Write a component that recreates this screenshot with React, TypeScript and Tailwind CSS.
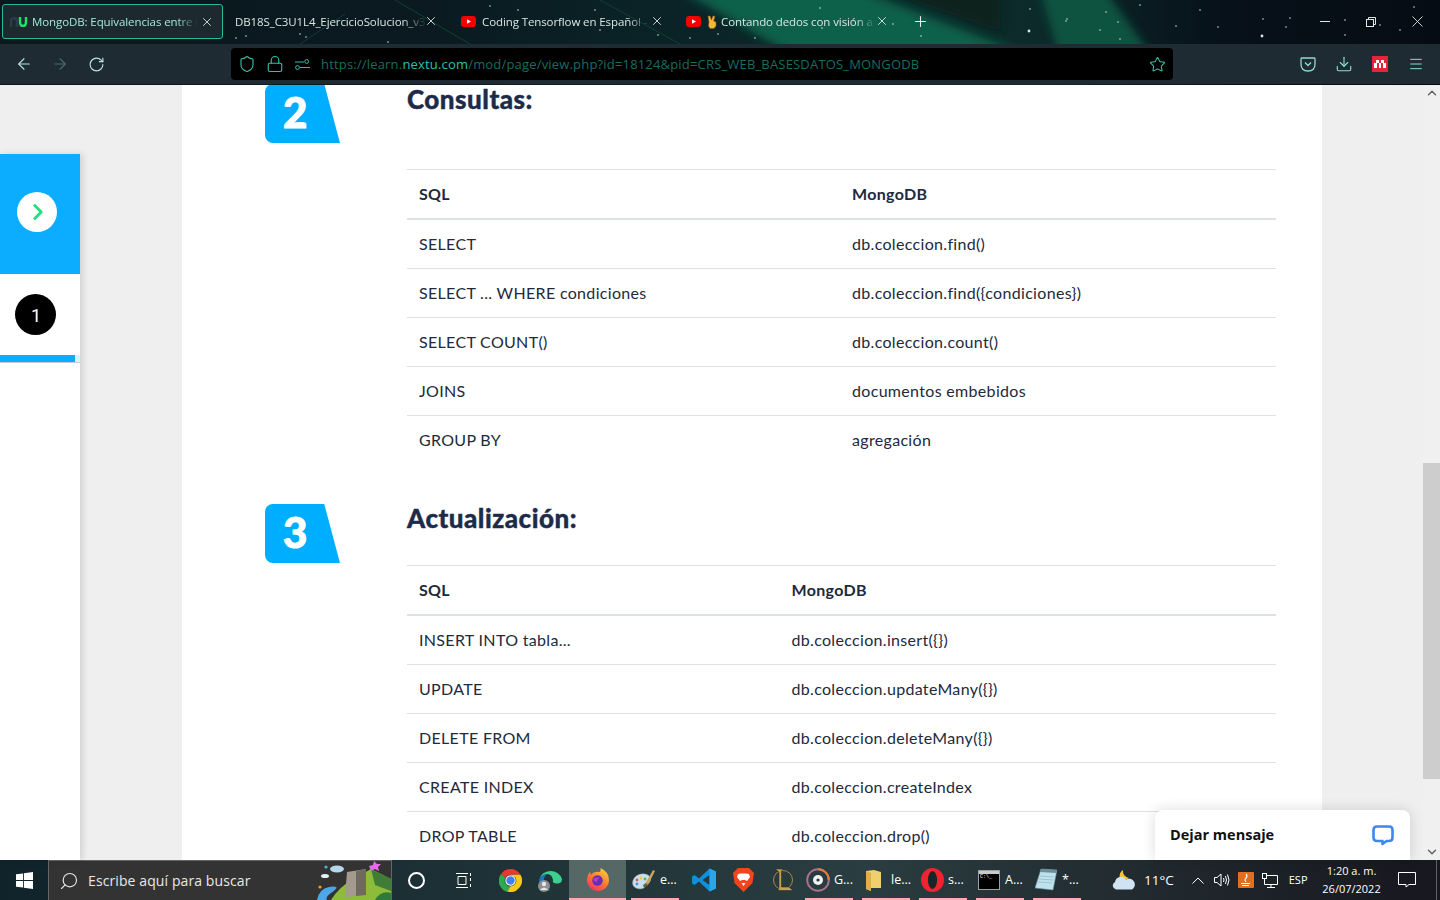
import { ReactNode } from "react";
import { ArrowLeft, ArrowRight, ChevronDown, ChevronRight, ChevronUp, Download, Lock, Menu, Plus, RotateCw, Search, Shield, Star, X } from "lucide-react";

const sans = "font-['Lato','Noto_Sans',sans-serif]";
const ui = "font-['Open_Sans','Noto_Sans',sans-serif]";

const consultas = [
  ["SELECT", "db.coleccion.find()"],
  ["SELECT ... WHERE condiciones", "db.coleccion.find({condiciones})"],
  ["SELECT COUNT()", "db.coleccion.count()"],
  ["JOINS", "documentos embebidos"],
  ["GROUP BY", "agregación"],
];

const actualizacion = [
  ["INSERT INTO tabla...", "db.coleccion.insert({})"],
  ["UPDATE", "db.coleccion.updateMany({})"],
  ["DELETE FROM", "db.coleccion.deleteMany({})"],
  ["CREATE INDEX", "db.coleccion.createIndex"],
  ["DROP TABLE", "db.coleccion.drop()"],
];

const stars = [
  [236, 38, 1], [246, 36, 1], [300, 34, 1], [306, 37, 1], [388, 42, 1], [490, 6, 1], [518, 10, 1], [595, 10, 1], [600, 30, 1], [658, 35, 1],
  [690, 38, 1], [718, 34, 1], [755, 38, 1], [820, 8, 1], [822, 28, 1], [893, 24, 1], [921, 36, 1], [1029, 31, 1], [1066, 21, 1], [1067, 19, 1],
  [1029, 31, 1.4], [1100, 30, 1], [1120, 39, 1], [1140, 5, 1], [1118, 22, 1], [1176, 26, 1], [1218, 27, 1], [1200, 10, 1], [1263, 19, 1], [1262, 36, 1],
  [1290, 18, 1], [1262, 36, 1.4], [1286, 27, 1], [1345, 20, 1], [1414, 7, 1], [1380, 25, 1], [1345, 35, 1], [1030, 9, 1], [1106, 12, 1], [1400, 30, 1],
];

function Galaxy() {
  return (
    <svg className="absolute left-0 top-0 h-[85px] w-[1440px]" viewBox="0 0 1440 85">
      <defs>
        <linearGradient id="sky" x1="0" x2="1" y1="0" y2="0">
          <stop offset="0" stopColor="#0b181e" />
          <stop offset="0.3" stopColor="#0a1a20" />
          <stop offset="0.42" stopColor="#0a2126" />
          <stop offset="0.66" stopColor="#0c2b2a" />
          <stop offset="0.72" stopColor="#0c2a2a" />
          <stop offset="0.8" stopColor="#091a20" />
          <stop offset="0.85" stopColor="#071119" />
          <stop offset="1" stopColor="#060c14" />
        </linearGradient>
        <filter id="soft"><feGaussianBlur stdDeviation="5" /></filter>
      </defs>
      <rect width="1440" height="85" fill="url(#sky)" />
      <g filter="url(#soft)">
        <polygon points="680,-10 860,-10 1040,60 800,60" fill="#0b6048" />
        <polygon points="880,-10 1000,-10 1000,32" fill="#07241f" />
        <polygon points="1040,-10 1105,-10 1155,60 1060,60" fill="#0e523f" />
      </g>
      <path d="M395 0 L470 44 M600 0 L680 44" stroke="#123f36" strokeWidth="1" />
      <path d="M345 14 L300 44" stroke="#0e3a32" strokeWidth="1" />
      {stars.map(([x, y, r], i) => (
        <circle key={i} cx={x} cy={y} r={r} fill="#dbe9e6" opacity={r > 1 ? 1 : 0.55} />
      ))}
    </svg>
  );
}

function YouTube() {
  return (
    <svg width="15" height="11" viewBox="0 0 15 11" className="shrink-0">
      <rect width="15" height="11" rx="3" fill="#f40000" />
      <path d="M6 3.2 L10 5.5 L6 7.8 Z" fill="#fff" />
    </svg>
  );
}

function Tab({ width, active, icon, title, titleWidth, closeLeft }: { width: string; active?: boolean; icon?: ReactNode; title: string; titleWidth: string; closeLeft: string }) {
  return (
    <div className={`relative flex h-[35px] shrink-0 items-center rounded-[3px] ${width} ${active ? "border border-[#2ab8a0] bg-[#1c2a30] pl-[7px] text-[#a5e6da]" : "pl-[12px] text-[#d9e6e3]"}`}>
      {icon}
      <div className={`overflow-hidden whitespace-nowrap pt-px text-[11.5px] leading-[16px] tracking-[-0.1px] [mask-image:linear-gradient(to_right,black_87%,transparent)] ${titleWidth} ${ui}`}>{title}</div>
      <X size={14} strokeWidth={1.5} className={`absolute top-[10px] text-[#dcebe8] ${closeLeft}`} />
    </div>
  );
}

function Emoji() {
  return (
    <svg width="11" height="14" viewBox="0 0 11 14" className="ml-[6px] mr-[3px] shrink-0">
      <path d="M2 7 L1 1 L3 1 L4.5 5 L6 .8 L8 1.4 L6.6 6 L9 7 L9 11 L7 13.5 L3 13.5 L1.5 11 Z" fill="#f5b83d" stroke="#8a5a10" strokeWidth=".6" />
    </svg>
  );
}

function NuLogo() {
  return (
    <svg width="18" height="10" viewBox="0 0 18 10" className="mr-[4px] shrink-0" fill="none" strokeWidth="2.4">
      <path d="M1 10 V5 Q1 1 4 1 Q7 1 7 5 V10" stroke="#2e3a48" />
      <path d="M10 0 V5 Q10 9 13 9 Q16 9 16 5 V0" stroke="#1ee06f" />
    </svg>
  );
}

function TabBar() {
  return (
    <div className="relative flex h-[44px] items-start pl-[2px] pt-[4px]">
      <Tab width="w-[221px]" active icon={<NuLogo />} title="MongoDB: Equivalencias entre l" titleWidth="w-[166px]" closeLeft="left-[197px]" />
      <Tab width="w-[226px]" title="DB18S_C3U1L4_EjercicioSolucion_v3" titleWidth="w-[192px]" closeLeft="left-[201px]" />
      <Tab width="w-[225px]" icon={<YouTube />} title="Coding Tensorflow en Español -" titleWidth="ml-[6px] w-[168px]" closeLeft="left-[201px]" />
      <Tab width="w-[225px]" icon={<><YouTube /><Emoji /></>} title="Contando dedos con visión a" titleWidth="w-[155px]" closeLeft="left-[201px]" />
      <div className="flex h-[35px] w-[42px] items-center justify-center"><Plus size={17} strokeWidth={1.5} className="text-[#e6f0ee]" /></div>
      <div className="ml-auto flex h-[35px] items-center text-[#dfe8e6]">
        <div className="flex w-[46px] justify-center"><div className="h-px w-[10px] bg-[#dfe8e6]" /></div>
        <div className="flex w-[46px] justify-center">
          <svg width="10" height="10" viewBox="0 0 10 10" fill="none" stroke="currentColor"><rect x=".5" y="2.5" width="7" height="7" /><path d="M2.5 2.5 V.5 H9.5 V7.5 H7.5" /></svg>
        </div>
        <div className="flex w-[46px] justify-center">
          <svg width="11" height="11" viewBox="0 0 11 11" stroke="currentColor" strokeWidth=".9"><path d="M.5 .5 L10.5 10.5 M10.5 .5 L.5 10.5" /></svg>
        </div>
      </div>
    </div>
  );
}

function ToolBar() {
  return (
    <div className="relative flex h-[40px] items-center bg-[#1f2b32]">
      <div className="flex w-[231px] items-center pl-[6px]">
        <div className="flex w-[36px] justify-center"><ArrowLeft size={18} strokeWidth={1.5} className="text-[#b5e5dc]" /></div>
        <div className="flex w-[36px] justify-center"><ArrowRight size={18} strokeWidth={1.5} className="text-[#4c6a67]" /></div>
        <div className="flex w-[36px] justify-center"><RotateCw size={17} strokeWidth={1.6} className="text-[#b5e5dc]" /></div>
      </div>
      <div className="flex h-[32px] w-[942px] items-center rounded-[4px] bg-black pl-[7px] pr-[7px]">
        <Shield size={18} strokeWidth={1.5} className="text-[#37bda8]" />
        <Lock size={18} strokeWidth={1.5} className="ml-[10px] text-[#37bda8]" />
        <svg width="15" height="11" viewBox="0 0 15 11" fill="none" stroke="#37bda8" className="ml-[11px]">
          <path d="M0 3 H9 M5 8.5 H15" />
          <circle cx="11.7" cy="2.5" r="1.9" />
          <circle cx="2.5" cy="8.5" r="1.9" />
        </svg>
        <div className={`ml-[11px] whitespace-nowrap pt-px text-[13px] tracking-[0.18px] text-[#176d60] ${ui}`}>
          https://learn.<span className="text-[#2fc0aa]">nextu.com</span>/mod/page/view.php?id=18124&pid=CRS_WEB_BASESDATOS_MONGODB
        </div>
        <Star size={17} strokeWidth={1.5} className="ml-auto text-[#37bda8]" />
      </div>
      <div className="flex flex-1 items-center justify-end pr-[16px] text-[#8fdccd]">
        <svg width="16" height="15" viewBox="0 0 16 15" fill="none" stroke="currentColor" strokeWidth="1.3">
          <path d="M1.5 1 H14.5 Q15 1 15 2 V7 Q15 14 8 14 Q1 14 1 7 V2 Q1 1 1.5 1 Z" />
          <path d="M5 5.5 L8 8.5 L11 5.5" />
        </svg>
        <Download size={18} strokeWidth={1.5} className="ml-[19px]" />
        <div className="ml-[19px] flex h-[16px] w-[16px] items-center justify-center bg-[#e6243a]">
          <svg width="14" height="8" viewBox="0 0 14 8" fill="#fff">
            <path d="M3 0 H6 V3 H3 Z M8 0 H11 V3 H8 Z M1 3 H4 V8 H1 Z M6 3 H8 V8 H6 Z M10 3 H13 V8 H10 Z" />
          </svg>
        </div>
        <Menu size={16} strokeWidth={1.5} className="ml-[20px]" />
      </div>
    </div>
  );
}

function Badge({ n, className }: { n: string; className?: string }) {
  return (
    <div className={`flex h-[59px] w-[75px] items-center rounded-l-[8px] bg-[#00aeff] pb-[4px] pl-[18px] [clip-path:polygon(0_0,79%_0,100%_100%,0_100%)] ${className ?? ""}`}>
      <span className={`text-[42px] leading-none font-black text-white [-webkit-text-stroke:1px_white] ${sans}`}>{n}</span>
    </div>
  );
}

function Table({ rows, cols }: { rows: string[][]; cols: string }) {
  return (
    <div className="w-[869px] border-t border-[#dee2e6] text-[16px] text-[#212a3b]">
      <div className={`grid h-[50px] items-center border-b-2 border-[#dee2e6] font-bold ${cols}`}>
        <div className="pl-[12px]">SQL</div>
        <div className="pl-[12px]">MongoDB</div>
      </div>
      {rows.map((row, i) => (
        <div key={row[0]} className={`grid items-center ${cols} ${i === rows.length - 1 ? "h-[48px]" : "h-[49px] border-b border-[#dee2e6]"}`}>
          <div className="pl-[12px]">{row[0]}</div>
          <div className="pl-[12px]">{row[1]}</div>
        </div>
      ))}
    </div>
  );
}

function Article() {
  return (
    <div className={`h-full w-[1140px] shrink-0 overflow-hidden bg-white tracking-[0.32px] ${sans}`}>
      <div className="flex pl-[83px]">
        <Badge n="2" className="-mt-[1px]" />
        <div className="ml-[67px]">
          <h2 className="h-[84px] text-[26px] leading-[28px] font-black tracking-[0.5px] text-[#1d2b4a] [-webkit-text-stroke:0.4px_#1d2b4a]">Consultas:</h2>
          <Table rows={consultas} cols="grid-cols-[433px_1fr]" />
        </div>
      </div>
      <div className="mt-[40px] flex pl-[83px]">
        <Badge n="3" />
        <div className="ml-[67px]">
          <h2 className="h-[61px] text-[26px] leading-[28px] font-black tracking-[0.5px] text-[#1d2b4a] [-webkit-text-stroke:0.4px_#1d2b4a]">Actualización:</h2>
          <Table rows={actualizacion} cols="grid-cols-[372.5px_1fr]" />
        </div>
      </div>
    </div>
  );
}

function Sidebar() {
  return (
    <div className="w-[80px] shrink-0 pt-[69px]">
      <div className="h-full bg-white shadow-[3px_0_6px_rgba(0,0,0,0.12)]">
        <div className="flex h-[120px] items-start bg-[#0cadff] pl-[17px] pt-[38px]">
          <div className="flex h-[40px] w-[40px] items-center justify-center rounded-full bg-white pl-[2px]">
            <ChevronRight size={26} strokeWidth={2.6} className="text-[#1fe07a]" />
          </div>
        </div>
        <div className="flex h-[81px] items-start pl-[15px] pt-[20px]">
          <div className="flex h-[41px] w-[41px] items-center justify-center rounded-full bg-black pl-px pt-[2px] font-['Roboto',sans-serif] text-[18px] text-white">1</div>
        </div>
        <div className="flex h-[8px] border-b border-[#c8ccd0] bg-[#d9f3ff]">
          <div className="h-[7px] w-[75px] bg-[#0cadff]" />
        </div>
      </div>
    </div>
  );
}

function Scrollbar() {
  return (
    <div className="flex h-full w-[17px] shrink-0 flex-col items-center bg-[#f0f0f0]">
      <ChevronUp size={14} strokeWidth={2.5} className="mt-[1px] text-[#5f6368]" />
      <div className="mt-[363px] h-[316px] w-full bg-[#cdcdcd]" />
      <ChevronDown size={14} strokeWidth={2.5} className="mt-auto mb-[1px] text-[#5f6368]" />
    </div>
  );
}

function ChatWidget() {
  return (
    <div className="absolute bottom-0 left-[1155px] flex h-[50px] w-[255px] items-center justify-between rounded-t-[8px] bg-white pl-[15px] pr-[16px] shadow-[0_0_14px_rgba(0,0,0,0.14)]">
      <span className={`text-[14.5px] font-bold text-[#111] ${ui}`}>Dejar mensaje</span>
      <svg width="22" height="21" viewBox="0 0 22 21" fill="none" stroke="#3f86f5" strokeWidth="2.6">
        <path d="M5 1.5 H17 Q20.5 1.5 20.5 5 V12.5 Q20.5 16 17 16 H14.5 L10.5 19 V16 H5 Q1.5 16 1.5 12.5 V5 Q1.5 1.5 5 1.5 Z" strokeLinejoin="round" />
      </svg>
    </div>
  );
}

function Cell({ width, active, running, children }: { width: string; active?: boolean; running?: boolean; children: ReactNode }) {
  return (
    <div className={`relative flex h-full shrink-0 items-center justify-center ${width} ${active ? "bg-[#566865]" : ""}`}>
      {children}
      {running && <div className="absolute bottom-0 left-0 h-[2px] w-full bg-[#ffabab]" />}
    </div>
  );
}

// cell for a running app with a cropped title next to its icon
function AppCell({ label, children }: { label: string; children: ReactNode }) {
  return (
    <div className="relative flex h-full w-[48px] shrink-0 items-center">
      <div className="flex w-[26px] shrink-0 justify-center">{children}</div>
      <span className={`ml-[3px] text-[12.5px] text-white ${ui}`}>{label}</span>
      <div className="absolute bottom-0 left-0 h-[2px] w-full bg-[#ffabab]" />
    </div>
  );
}

const Chrome = () => (
  <svg width="23" height="23" viewBox="0 0 22 22">
    <path d="M11 0 A11 11 0 0 1 20.5 5.5 L11 5.5 A5.5 5.5 0 0 0 6.2 8.2 L1.8 5 A11 11 0 0 1 11 0Z" fill="#e33b2e" />
    <path d="M1.8 5 L6.2 8.2 A5.5 5.5 0 0 0 11 16.5 L8 22 A11 11 0 0 1 1.8 5Z" fill="#2fa84f" />
    <path d="M20.5 5.5 A11 11 0 0 1 8 21.6 L11 16.5 A5.5 5.5 0 0 0 15.6 8 L11 5.5 Z" fill="#f9c916" />
    <circle cx="11" cy="11" r="5" fill="#fff" />
    <circle cx="11" cy="11" r="4" fill="#3f80ea" />
  </svg>
);

const Edge = () => (
  <svg width="24" height="25" viewBox="0 0 24 25">
    <path d="M1 12 A12 12 0 0 1 24 11 Q24 16 18 15.5 Q14 15 15 12 Q14 6 9 6 Q3 7 1 12Z" fill="#3ccf90" />
    <path d="M1 12 Q3 7 9 6 Q5 9 6 15 Q7 21 13 23 A12 12 0 0 1 1 12Z" fill="#1475c9" />
    <circle cx="6" cy="18" r="6" fill="#8d8f92" />
    <circle cx="6" cy="16" r="2.2" fill="#e8e8e8" />
    <path d="M2 22 Q6 17 10 22 Z" fill="#e8e8e8" />
  </svg>
);

const Firefox = () => (
  <svg width="24" height="24" viewBox="0 0 24 24">
    <defs>
      <linearGradient id="ff" x1="0.8" y1="0" x2="0.2" y2="1">
        <stop offset="0" stopColor="#ffd33d" />
        <stop offset="0.5" stopColor="#ff7a2f" />
        <stop offset="1" stopColor="#ee2f6c" />
      </linearGradient>
    </defs>
    <path d="M1 12 Q1 7 4 4 L5 7 Q8 3 14 4 Q15 2 14.5 0 Q23 4 23 12 A11 11 0 0 1 1 12Z" fill="url(#ff)" />
    <circle cx="11.5" cy="12.5" r="5.2" fill="#6a2bb5" />
    <path d="M7 11 Q11 8 14 10 Q11 11 11 14 Q8 14 7 11Z" fill="#b33fc4" />
  </svg>
);

const Palette = () => (
  <svg width="24" height="22" viewBox="0 0 24 22">
    <path d="M0.5 14 C1 7 8 4 13 5 C19 6 20 11 17 14 C14 15 13 16 13 18 C11 21 1 21 0.5 14Z" fill="#c9e0ec" stroke="#7d98a8" strokeWidth=".5" />
    <circle cx="5" cy="11" r="1.4" fill="#e05a4b" />
    <circle cx="9" cy="9" r="1.4" fill="#f3c737" />
    <circle cx="13" cy="10" r="1.4" fill="#4fb868" />
    <circle cx="5" cy="15" r="1.4" fill="#4c8fe0" />
    <path d="M13 15 L21 1 L23 2 L16 16 Z" fill="#caa15d" />
    <path d="M11 16 L14 14 L16 16.5 L12 19Z" fill="#6e5a3c" />
  </svg>
);

const VsCode = () => (
  <svg width="24" height="24" viewBox="0 0 24 24">
    <path d="M17.5 .5 L24 3.5 V20.5 L17.5 23.5 L7 13.5 L2.5 17 L0 15.5 V8.5 L2.5 7 L7 10.5 Z M17.5 7 L10.5 12 L17.5 17 Z" fill="#0f8fdc" />
    <path d="M17.5 .5 L24 3.5 V20.5 L17.5 23.5 Z" fill="#2aa5ea" />
  </svg>
);

const Brave = () => (
  <svg width="21" height="24" viewBox="0 0 21 24">
    <path d="M5 0 H16 L19 3 L21 5 L19.5 15 L10.5 24 L1.5 15 L0 5 L2 3 Z" fill="#f4431f" />
    <path d="M5 6 L8 5.5 H13 L16 6 L17 9 L14 13 L12 12 H9 L7 13 L4 9 Z M8.5 15 H12.5 L10.5 18 Z" fill="#fff" />
  </svg>
);

const League = () => (
  <svg width="22" height="24" viewBox="0 0 22 24" fill="none">
    <circle cx="11" cy="12" r="9.5" stroke="#a9873f" strokeWidth="1" />
    <path d="M3.5 1 H11 L9.5 3 V19 H17 L21 22.5 H6 L7 20 V4 Z" fill="#c6a052" stroke="#20282c" strokeWidth=".5" />
  </svg>
);

const Groove = () => (
  <svg width="24" height="24" viewBox="0 0 24 24" fill="none">
    <circle cx="12" cy="12" r="10.8" stroke="#a96f8f" strokeWidth="2" />
    <path d="M12 1.2 A10.8 10.8 0 0 1 22.8 12" stroke="#e07b3a" strokeWidth="2" />
    <circle cx="12" cy="12" r="5" fill="#f1f1f1" />
    <circle cx="12" cy="12" r="1.6" fill="#2a3638" />
  </svg>
);

const Folder = () => (
  <svg width="15" height="21" viewBox="0 0 15 21" className="-ml-[4px]">
    <path d="M0 1 L8 0 L15 2 V18 L5 18 L5 21 L0 19 Z" fill="#f0cf6e" />
    <path d="M0 1 L5 3 V21 L0 19 Z" fill="#dcb14a" />
  </svg>
);

const Opera = () => (
  <svg width="23" height="24" viewBox="0 0 23 24">
    <ellipse cx="11.5" cy="12" rx="11.5" ry="12" fill="#f0242f" />
    <ellipse cx="11.5" cy="12" rx="4.6" ry="9" fill="#18262a" />
  </svg>
);

const Cmd = () => (
  <div className="flex h-[20px] w-[22px] flex-col border border-[#9aa0a3] bg-black">
    <div className="h-[3px] bg-[#c7cbce]" />
    <div className="pl-[1px] font-mono text-[5px] leading-[7px] text-white">C:\_</div>
  </div>
);

const Notepad = () => (
  <svg width="22" height="24" viewBox="0 0 22 24">
    <path d="M6 1 L22 2 L18 22 L0 20 Z" fill="#bfe3ee" stroke="#6c8b97" strokeWidth=".6" />
    <path d="M6 1 L22 2 L21.3 5 L4.7 4 Z" fill="#6d8d99" />
    <path d="M5 8 L19 9 M4 11 L18 12 M3 14 L17 15" stroke="#8fb6c4" strokeWidth=".7" />
  </svg>
);

function Taskbar() {
  return (
    <div className={`flex h-[40px] shrink-0 items-stretch bg-gradient-to-r from-[#10232a] via-[#2a3d40] via-60% to-[#17171e] text-white ${ui}`}>
      <div className="flex w-[48px] items-center justify-center">
        <svg width="17" height="17" viewBox="0 0 16 16" fill="#fff">
          <path d="M0 2.2 L6.6 1.3 V7.6 H0 Z M7.4 1.2 L16 0 V7.6 H7.4 Z M0 8.4 H6.6 V14.7 L0 13.8 Z M7.4 8.4 H16 V16 L7.4 14.8 Z" />
        </svg>
      </div>
      <div className="flex w-[344px] items-center overflow-hidden border border-b-0 border-[#666] bg-[#333333] pl-[10px]">
        <Search size={20} strokeWidth={1.4} className="-scale-x-100 text-[#e4e4e4]" />
        <span className="ml-[9px] text-[14px] tracking-[0.1px] text-[#e8e8e8]">Escribe aquí para buscar</span>
        <svg width="74" height="39" viewBox="0 0 74 39" className="ml-auto shrink-0">
          <path d="M14 39 Q22 26 36 18 L54 8 L74 18 V39 Z" fill="#8dbb3a" />
          <path d="M54 8 L74 18 V30 L58 24 Z" fill="#3f7d36" />
          <path d="M0 39 Q2 28 12 26 Q26 24 14 32 Q8 36 10 39 Z" fill="#4da6e8" />
          <path d="M30 11 L49 8 L49 34 L28 36 Z" fill="#a39c8e" />
          <path d="M39 10 L49 8 L49 34 L39 35 Z" fill="#6f695f" />
          <path d="M58 39 Q64 29 74 32 V39 Z" fill="#2f7a3a" />
          <ellipse cx="20" cy="8" rx="7" ry="3.5" fill="#b6d8ee" />
          <ellipse cx="8" cy="15" rx="4" ry="2" fill="#e6f2fa" />
          <circle cx="9" cy="6" r="1.6" fill="#3dbad8" />
          <circle cx="3" cy="26" r="1.6" fill="#f39c1f" />
          <path d="M52 5 L56 4 L57 0 L60 3 L64 3 L61 6 L62 10 L58 8 L54 10 Z" fill="#e56be8" />
        </svg>
      </div>
      <Cell width="w-[48px]"><div className="h-[17px] w-[17px] rounded-full border-[2.5px] border-white" /></Cell>
      <Cell width="w-[47px]">
        <svg width="16" height="15" viewBox="0 0 16 15" fill="none" stroke="#fff">
          <path d="M0 .5 H12 M0 14.5 H12 M2 3.5 H10 V11.5 H2 Z M14.5 0 V3 M14.5 5 V8 M14.5 11 V14" />
        </svg>
      </Cell>
      <div className="w-[3px]" />
      <Cell width="w-[40px]"><Chrome /></Cell>
      <Cell width="w-[39px]"><Edge /></Cell>
      <Cell width="w-[57px]" active running><Firefox /></Cell>
      <div className="w-[5px]" />
      <AppCell label="e..."><Palette /></AppCell>
      <div className="w-[5px]" />
      <Cell width="w-[40px]"><VsCode /></Cell>
      <Cell width="w-[39px]"><Brave /></Cell>
      <Cell width="w-[39px]"><League /></Cell>
      <div className="w-[3px]" />
      <AppCell label="G..."><Groove /></AppCell>
      <div className="w-[9px]" />
      <AppCell label="le..."><Folder /></AppCell>
      <div className="w-[9px]" />
      <AppCell label="s..."><Opera /></AppCell>
      <div className="w-[9px]" />
      <AppCell label="A..."><Cmd /></AppCell>
      <div className="w-[9px]" />
      <AppCell label="*..."><Notepad /></AppCell>
      <div className="flex flex-1 items-center">
        <svg width="24" height="20" viewBox="0 0 24 20" className="ml-[31px] shrink-0">
          <path d="M11 0 A6.5 6.5 0 0 0 8 8 A7 7 0 0 0 17 8 A7 7 0 0 1 11 0Z" fill="#f7c331" />
          <path d="M4 19.5 A4 4 0 0 1 3 12 A6 6 0 0 1 14 9.5 A5 5 0 0 1 20 19.5 Z" fill="#cfe3f2" />
        </svg>
        <span className="ml-[8px] text-[13.5px]">11°C</span>
        <svg width="12" height="7" viewBox="0 0 12 7" fill="none" stroke="#fff" className="ml-[18px]"><path d="M.5 6.5 L6 1 L11.5 6.5" /></svg>
        <svg width="16" height="14" viewBox="0 0 16 14" fill="none" stroke="#fff" className="ml-[10px]">
          <path d="M.5 4.5 H3 L7 1 V13 L3 9.5 H.5 Z M9.5 5 Q10.5 7 9.5 9 M11.5 3 Q13.5 7 11.5 11 M13.5 1.5 Q16.5 7 13.5 12.5" />
        </svg>
        <svg width="16" height="16" viewBox="0 0 16 16" className="ml-[8px]">
          <rect width="16" height="16" rx="1" fill="#e0701f" />
          <path d="M8 2 Q10 4 8 6 Q6 8 8 10 M3 11.5 H12 M4 13.5 H11" fill="none" stroke="#fff" strokeWidth="1.1" />
        </svg>
        <svg width="16" height="15" viewBox="0 0 16 15" fill="none" stroke="#fff" className="ml-[8px]">
          <path d="M4 2.5 H15.5 V11.5 H2.5 V6 M9 11.5 V14 M5 14.5 H13" />
          <rect x=".5" y=".5" width="4" height="5" />
        </svg>
        <span className="ml-[11px] text-[11px]">ESP</span>
        <div className="ml-[15px] flex w-[58px] flex-col items-center text-[11px] leading-[18px] whitespace-nowrap">
          <span>1:20 a. m.</span>
          <span>26/07/2022</span>
        </div>
        <svg width="18" height="16" viewBox="0 0 18 16" fill="none" stroke="#fff" className="ml-[17px]">
          <path d="M.5 .5 H17.5 V12.5 H11 L8 15 V12.5 H.5 Z" />
        </svg>
        <div className="ml-auto mr-[3px] h-full w-px bg-[#59636a]" />
      </div>
    </div>
  );
}

export default function App() {
  return (
    <div className="relative flex h-screen w-full flex-col overflow-hidden bg-[#efefef]">
      <Galaxy />
      <TabBar />
      <ToolBar />
      <div className="relative mt-px flex min-h-0 flex-1">
        <Sidebar />
        <div className="w-[102px] shrink-0" />
        <Article />
        <div className="flex-1" />
        <Scrollbar />
        <ChatWidget />
      </div>
      <Taskbar />
    </div>
  );
}
